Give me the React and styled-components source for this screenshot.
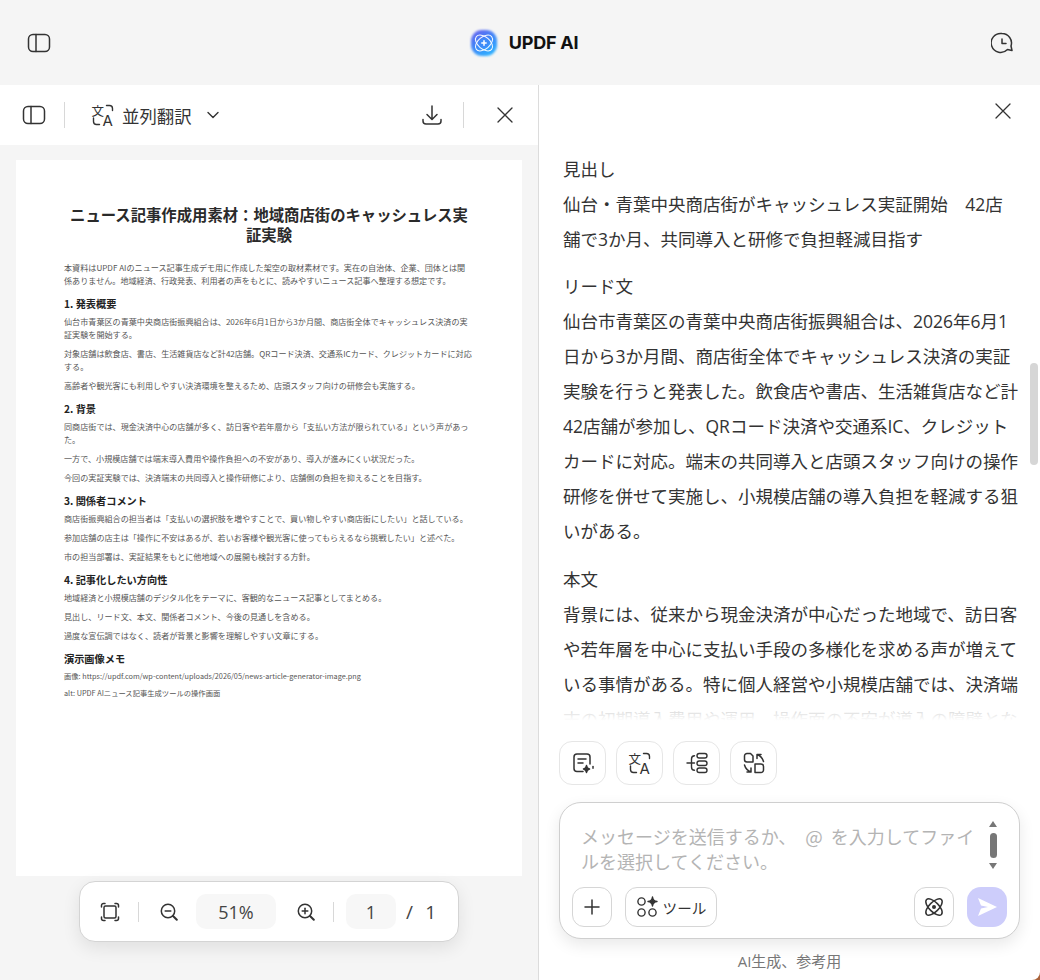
import React from "react";
import styled, { createGlobalStyle } from "styled-components";

const Global = createGlobalStyle`
  html, body { margin: 0; padding: 0; background: #a9623a; }
  body { font-family: "Open Sans", "Noto Sans CJK JP", sans-serif; color: #222; }
  * { box-sizing: border-box; }
`;

const Shell = styled.div`
  width: 1040px; height: 980px; overflow: hidden;
  display: flex; flex-direction: column; background: #fff;
  border-bottom-right-radius: 8px;
`;
const TopBar = styled.header`
  height: 85px; flex: none; background: #f5f5f5;
  display: flex; align-items: center; justify-content: space-between;
  padding: 0 27px 0 27px; position: relative;
`;
const Brand = styled.div`
  display: flex; align-items: center; gap: 9px;
  font: 700 18px "Inter", sans-serif; color: #111; letter-spacing: -0.25px;
  margin-left: 4px;
`;
const IconSlot = styled.span`
  display: inline-flex; align-items: center; justify-content: center; flex: none;
  color: ${p => p.$color || "#333"};
`;
const Split = styled.div`
  flex: 1; min-height: 0; display: grid; grid-template-columns: 538px minmax(0, 1fr);
`;
const LeftPane = styled.section`
  display: flex; flex-direction: column; min-height: 0;
  border-right: 1px solid #dcdcdc; width: 539px; position: relative;
`;
const PdfToolbar = styled.div`
  height: 60px; flex: none; display: flex; align-items: center; padding: 0 25px 0 22px;
`;
const Divider = styled.span`
  width: 1px; height: ${p => p.$h || 26}px; background: #d8d8d8; flex: none;
  margin: 0 ${p => p.$r ?? 26}px 0 ${p => p.$l ?? 20}px;
`;
const ModeLabel = styled.span`
  font-size: 17.4px; color: #333; margin: 0 14px 0 7px;
  font-family: "Noto Sans CJK JP", sans-serif;
`;
const Spacer = styled.span` flex: 1; `;
const Viewer = styled.div`
  flex: 1; min-height: 0; background: #f5f5f5; padding: 15px 16px 0; position: relative; overflow: hidden;
`;
const Sheet = styled.article`
  width: 506px; height: 716px; background: #fff; padding: 44px 48px 0;
  font-family: "Noto Sans CJK JP", sans-serif; color: #555;
`;
const SheetTitle = styled.h1`
  margin: 0 -8px 17px; font-size: 15.35px; line-height: 20px; font-weight: 700; text-align: center; color: #2a2a2a;
  white-space: nowrap;
`;
const SheetHeading = styled.h2`
  margin: 10px 0 4.5px; font-size: 10.2px; line-height: 13px; font-weight: 700; color: #222;
`;
const SheetLine = styled.p`
  margin: 0 -10px ${p => p.$small ? 5 : 6.3}px 0; font-size: ${p => p.$small ? 7.3 : 8.1}px;
  line-height: ${p => p.$small ? 12 : 13}px; white-space: nowrap;
`;
const ZoomBar = styled.div`
  position: absolute; left: 79px; top: 736px; width: 380px; height: 61px;
  background: #fff; border: 1px solid #d4d4d4; border-radius: 16px;
  box-shadow: 0 6px 18px rgba(0,0,0,.09);
  display: flex; align-items: center; padding: 0 0 0 20px;
  font-size: 18px; color: #444;
`;
const ZoomField = styled.span`
  width: ${p => p.$w}px; height: 35px; background: #f7f7f7; border-radius: 10px;
  display: flex; align-items: center; justify-content: center; flex: none;
  margin: ${p => p.$m || "0"};
`;
const PageTotal = styled.span`
  margin-left: 10px; width: 30px; display: flex; justify-content: space-between; font-size: 19px;
`;
const RightPane = styled.section`
  display: flex; flex-direction: column; min-height: 0; min-width: 0; position: relative; padding: 0 0 0 1px;
`;
const CloseRow = styled.div`
  height: 60px; flex: none; display: flex; justify-content: flex-end; align-items: flex-start;
  padding: 18px 29px 0 0;
`;
const Answer = styled.div`
  height: 590px; flex: none; padding: 7px 16px 0 24px; overflow: hidden; position: relative;
  font-family: "Open Sans", "Noto Sans CJK JP", sans-serif; font-size: 17.5px; line-height: 35px; color: #333;
`;
const AnswerBlock = styled.p`
  margin: 0 0 12.4px; white-space: nowrap;
`;
const Fade = styled.div`
  position: absolute; left: 0; right: 0; bottom: 0; height: 60px;
  background: linear-gradient(to bottom, rgba(255,255,255,0) 0, rgba(255,255,255,0) 38%, rgba(255,255,255,.72) 42%, rgba(255,255,255,.85) 62%, #fff 76%);
`;
const ScrollThumb = styled.div`
  position: absolute; right: 2px; top: 218px; width: 8px; height: 102px; background: #d6d6d6; border-radius: 4px;
`;
const Actions = styled.div`
  display: flex; gap: 10px; padding: 0 0 0 20px; flex: none; margin-top: 6px;
`;
const ActionButton = styled.button`
  width: 47px; height: 44px; padding: 0; border: 1px solid #e6e6e6; border-radius: 13px; background: #fff;
  display: flex; align-items: center; justify-content: center; color: #333;
`;
const Composer = styled.div`
  margin: 17px 20px 0 20px; height: 137px; flex: none; background: #fff;
  border: 1px solid #cfcfcf; border-radius: 22px; box-shadow: 0 6px 16px rgba(0,0,0,.09);
  display: flex; flex-direction: column; padding: 21px 12px 11px; position: relative;
`;
const Placeholder = styled.div`
  font-family: "Noto Sans CJK JP", sans-serif;
  font-size: 18px; line-height: 25px; color: #b4b4b4; padding-left: 9px; white-space: nowrap; flex: 1;
`;
const AtSign = styled.span`
  display: inline-block; margin: 0 8px 0 9px; font-size: 18.5px;
`;
const TextScroll = styled.div`
  position: absolute; right: 22px; top: 18px; width: 8px; height: 48px;
  display: flex; flex-direction: column; align-items: center; justify-content: space-between;
`;
const Arrow = styled.span`
  width: 0; height: 0; border-left: 4px solid transparent; border-right: 4px solid transparent;
  ${p => p.$up ? "border-bottom: 6px solid #777;" : "border-top: 6px solid #777;"}
`;
const Thumb = styled.span` width: 7px; height: 25px; border-radius: 4px; background: #777; `;
const ComposerRow = styled.div` display: flex; align-items: center; gap: 13px; `;
const ToolButton = styled.button`
  height: 40px; width: ${p => p.$w || 40}px; padding: 0; background: #fff; border: 1px solid #d6d6d6; border-radius: 12px;
  display: flex; align-items: center; justify-content: center; gap: 5px; color: #333; flex: none;
  font: 400 14.6px "Noto Sans CJK JP", sans-serif;
`;
const SendButton = styled.button`
  height: 40px; width: 40px; padding: 0; border: 0; border-radius: 14px; background: #cdcdfb;
  display: flex; align-items: center; justify-content: center; flex: none;
`;
const Note = styled.div`
  text-align: center; font-size: 15px; line-height: 20px; color: #777; margin-top: 12px;
`;

const Svg = ({ w = 24, h = 24, vb, sw = 1.5, children }) => (
  <svg width={w} height={h} viewBox={vb || `0 0 ${w} ${h}`} fill="none" stroke="currentColor" strokeWidth={sw} strokeLinecap="round" strokeLinejoin="round">{children}</svg>
);
const PanelIcon = () => (
  <Svg w={24} h={20}><rect x="1.5" y="1.5" width="21" height="17" rx="4.5" /><path d="M9 1.5v17" /></Svg>
);
const Logo = () => (
  <svg width="32" height="32" viewBox="0 0 32 32">
    <defs>
      <linearGradient id="lg" x1="0.1" y1="0" x2="0.7" y2="1"><stop offset="0" stopColor="#6a62ee" /><stop offset=".5" stopColor="#3f86f8" /><stop offset="1" stopColor="#2fb2ff" /></linearGradient>
      <filter id="lb" x="-20%" y="-20%" width="140%" height="140%"><feGaussianBlur stdDeviation="1.3" /></filter>
    </defs>
    <rect x="3" y="3" width="26" height="26" rx="11" fill="url(#lg)" filter="url(#lb)" />
    <g fill="none" stroke="#fff" strokeWidth="1" opacity=".95">
      <ellipse cx="16" cy="16" rx="10" ry="6" transform="rotate(40 16 16)" />
      <ellipse cx="16" cy="16" rx="10" ry="6" transform="rotate(-40 16 16)" />
    </g>
    <circle cx="16" cy="16" r="4.6" fill="#3f8cf8" />
    <path d="M16 13.800v4.400M13.800 16h4.400" stroke="#fff" strokeWidth="1.5" strokeLinecap="round" />
  </svg>
);
const HistoryIcon = () => (
  <Svg w={22} h={22}><path d="M11 1.5a9.500 9.500 0 0 1 9 12.500l1 4.500-4.500-1A9.500 9.500 0 1 1 11 1.500z" /><path d="M11 7v4.500h4" /></Svg>
);
const TranslateIcon = () => (
  <svg width="24" height="24" viewBox="0 0 24 24" fill="none" stroke="currentColor" strokeWidth="1.4" strokeLinecap="round" strokeLinejoin="round">
    <path d="M15.500 2.500h3A3 3 0 0 1 21.500 5.500v2" />
    <path d="M2.500 15v3.500a3 3 0 0 0 3 3h3" />
    <text x="0.5" y="12.500" fontSize="12.500" fill="currentColor" stroke="none" fontFamily="Noto Sans CJK JP">文</text>
    <text x="11.500" y="23" fontSize="15" fill="currentColor" stroke="none" fontFamily="Inter">A</text>
  </svg>
);
const Chevron = () => <Svg w={14} h={14} sw={1.4}><path d="M2 4.500 7 9.500 12 4.500" /></Svg>;
const Download = () => (
  <Svg w={22} h={22} sw={1.5}><path d="M11 2v13M6 10.500 11 15.500 16 10.500" /><path d="M2 15.500v1.500a3 3 0 0 0 3 3h12a3 3 0 0 0 3-3v-1.500" /></Svg>
);
const Cross = () => <Svg w={16} h={16} sw={1.3}><path d="M1 1 15 15M15 1 1 15" /></Svg>;
const FitIcon = () => (
  <Svg w={20} h={20}><rect x="4" y="4" width="12" height="12" rx="1.500" /><path d="M1.500 5V3.500a2 2 0 0 1 2-2H5M15 1.500h1.500a2 2 0 0 1 2 2V5M18.500 15v1.500a2 2 0 0 1-2 2H15M5 18.500H3.500a2 2 0 0 1-2-2V15" /></Svg>
);
const ZoomIcon = ({ plus }) => (
  <Svg w={18} h={18}><circle cx="8" cy="8" r="6.700" /><path d="M5.200 8h5.600" />{plus && <path d="M8 5.200v5.600" />}<path d="M13 13 16.800 16.800" strokeWidth="2" /></Svg>
);
const SummaryIcon = () => (
  <Svg w={24} h={24} sw={1.5}>
    <path d="M12 20.500H6a3 3 0 0 1-3-3V6a3 3 0 0 1 3-3h10a3 3 0 0 1 3 3v7" />
    <path d="M7 8h8M7 12h5" />
    <path d="M15.500 14.500c.3 2.400 1 3.100 3 3.500-2 .4-2.700 1.100-3 3.500-.3-2.400-1-3.100-3-3.500 2-.4 2.700-1.100 3-3.500z" fill="currentColor" />
    <path d="M22 15.500v1.800" />
  </Svg>
);
const TreeIcon = () => (
  <Svg w={24} h={24} sw={1.4}>
    <rect x="12" y="2.500" width="10" height="4.500" rx="2.200" /><rect x="12" y="10" width="10" height="4.500" rx="2.200" /><rect x="12" y="17" width="10" height="4.500" rx="2.200" />
    <path d="M9.500 4.800C7.500 4.800 6.500 6 6.500 8v8c0 2 1 3.200 3 3.200M2 12h7.500" />
  </Svg>
);
const SwapIcon = () => (
  <Svg w={24} h={24} sw={1.5}>
    <path d="M2.500 5A2.500 2.500 0 0 1 5 2.500h3.500L11 5v6H5a2.500 2.500 0 0 1-2.500-2.500z" />
    <path d="M13 13h6a2.500 2.500 0 0 1 2.500 2.500V19a2.500 2.500 0 0 1-2.500 2.500H13z" />
    <path d="M15 3.500h4M15 3.500v4M15 3.500c3 1 5.500 3.500 6.500 7" />
    <path d="M9 21H5M9 21v-4M9 21c-3-1-5.500-3.500-6.500-7" />
  </Svg>
);
const ToolsIcon = () => (
  <Svg w={22} h={22} sw={1.4}>
    <circle cx="5.500" cy="5.500" r="3.600" /><circle cx="5.500" cy="16.500" r="3.600" /><circle cx="16.500" cy="16.500" r="3.600" />
    <path d="M16.500 1c.3 3 1.500 4.200 4.500 4.500-3 .3-4.200 1.500-4.500 4.500-.3-3-1.500-4.200-4.500-4.500 3-.3 4.200-1.500 4.500-4.500z" fill="currentColor" />
  </Svg>
);
const AtomIcon = () => (
  <Svg w={22} h={22} sw={1.5}>
    <ellipse cx="11" cy="11" rx="10.500" ry="4.800" transform="rotate(45 11 11)" />
    <ellipse cx="11" cy="11" rx="10.500" ry="4.800" transform="rotate(-45 11 11)" />
    <circle cx="11" cy="11" r="2" fill="currentColor" stroke="none" />
  </Svg>
);
const PlusIcon = () => <Svg w={16} h={16} sw={1.5}><path d="M8 1v14M1 8h14" /></Svg>;
const SendIcon = () => (
  <svg width="22" height="20" viewBox="0 0 22 20"><path d="M2 1 21 10 2 19 5 11.500 12 10 5 8.500z" fill="#fff" /></svg>
);

const sheet = [
  ["p", "本資料はUPDF AIのニュース記事生成デモ用に作成した架空の取材素材です。実在の自治体、企業、団体とは関", "係ありません。地域経済、行政発表、利用者の声をもとに、読みやすいニュース記事へ整理する想定です。"],
  ["h", "1. 発表概要"],
  ["p", "仙台市青葉区の青葉中央商店街振興組合は、2026年6月1日から3か月間、商店街全体でキャッシュレス決済の実", "証実験を開始する。"],
  ["p", "対象店舗は飲食店、書店、生活雑貨店など計42店舗。QRコード決済、交通系ICカード、クレジットカードに対応", "する。"],
  ["p", "高齢者や観光客にも利用しやすい決済環境を整えるため、店頭スタッフ向けの研修会も実施する。"],
  ["h", "2. 背景"],
  ["p", "同商店街では、現金決済中心の店舗が多く、訪日客や若年層から「支払い方法が限られている」という声があっ", "た。"],
  ["p", "一方で、小規模店舗では端末導入費用や操作負担への不安があり、導入が進みにくい状況だった。"],
  ["p", "今回の実証実験では、決済端末の共同導入と操作研修により、店舗側の負担を抑えることを目指す。"],
  ["h", "3. 関係者コメント"],
  ["p", "商店街振興組合の担当者は「支払いの選択肢を増やすことで、買い物しやすい商店街にしたい」と話している。"],
  ["p", "参加店舗の店主は「操作に不安はあるが、若いお客様や観光客に使ってもらえるなら挑戦したい」と述べた。"],
  ["p", "市の担当部署は、実証結果をもとに他地域への展開も検討する方針。"],
  ["h", "4. 記事化したい方向性"],
  ["p", "地域経済と小規模店舗のデジタル化をテーマに、客観的なニュース記事としてまとめる。"],
  ["p", "見出し、リード文、本文、関係者コメント、今後の見通しを含める。"],
  ["p", "過度な宣伝調ではなく、読者が背景と影響を理解しやすい文章にする。"],
  ["h", "演示画像メモ"],
  ["s", "画像: https://updf.com/wp-content/uploads/2026/05/news-article-generator-image.png"],
  ["s", "alt: UPDF AIニュース記事生成ツールの操作画面"],
];

const answer = [
  ["見出し", "仙台・青葉中央商店街がキャッシュレス実証開始　42店", "舗で3か月、共同導入と研修で負担軽減目指す"],
  ["リード文", "仙台市青葉区の青葉中央商店街振興組合は、2026年6月1", "日から3か月間、商店街全体でキャッシュレス決済の実証", "実験を行うと発表した。飲食店や書店、生活雑貨店など計", "42店舗が参加し、QRコード決済や交通系IC、クレジット", "カードに対応。端末の共同導入と店頭スタッフ向けの操作", "研修を併せて実施し、小規模店舗の導入負担を軽減する狙", "いがある。"],
  ["本文", "背景には、従来から現金決済が中心だった地域で、訪日客", "や若年層を中心に支払い手段の多様化を求める声が増えて", "いる事情がある。特に個人経営や小規模店舗では、決済端", "末の初期導入費用や運用、操作面の不安が導入の障壁とな"],
];

const withBreaks = lines => lines.map((l, i) => <React.Fragment key={i}>{i > 0 && <br />}{l}</React.Fragment>);

export default function App() {
  return (
    <Shell>
      <Global />
      <TopBar>
        <IconSlot><PanelIcon /></IconSlot>
        <Brand><Logo />UPDF AI</Brand>
        <IconSlot><HistoryIcon /></IconSlot>
      </TopBar>
      <Split>
        <LeftPane>
          <PdfToolbar>
            <IconSlot><PanelIcon /></IconSlot>
            <Divider $l={18} />
            <IconSlot><TranslateIcon /></IconSlot>
            <ModeLabel>並列翻訳</ModeLabel>
            <IconSlot><Chevron /></IconSlot>
            <Spacer />
            <IconSlot><Download /></IconSlot>
            <Divider $l={20} $r={33} />
            <IconSlot><Cross /></IconSlot>
          </PdfToolbar>
          <Viewer>
            <Sheet>
              <SheetTitle>ニュース記事作成用素材：地域商店街のキャッシュレス実<br />証実験</SheetTitle>
              {sheet.map(([k, ...lines], i) =>
                k === "h"
                  ? <SheetHeading key={i}>{lines[0]}</SheetHeading>
                  : <SheetLine key={i} $small={k === "s"}>{withBreaks(lines)}</SheetLine>
              )}
            </Sheet>
            <ZoomBar>
              <IconSlot><FitIcon /></IconSlot>
              <Divider $h={20} $l={18} $r={21} />
              <IconSlot><ZoomIcon /></IconSlot>
              <ZoomField $w={80} $m="0 21px 0 18px">51%</ZoomField>
              <IconSlot><ZoomIcon plus /></IconSlot>
              <Divider $h={20} $l={18} $r={12} />
              <ZoomField $w={50}>1</ZoomField>
              <PageTotal><span>/</span><span>1</span></PageTotal>
            </ZoomBar>
          </Viewer>
        </LeftPane>
        <RightPane>
          <CloseRow><IconSlot $color="#333"><Cross /></IconSlot></CloseRow>
          <Answer>
            {answer.map((lines, i) => <AnswerBlock key={i}>{withBreaks(lines)}</AnswerBlock>)}
            <Fade />
            <ScrollThumb />
          </Answer>
          <Actions>
            <ActionButton><SummaryIcon /></ActionButton>
            <ActionButton><TranslateIcon /></ActionButton>
            <ActionButton><TreeIcon /></ActionButton>
            <ActionButton><SwapIcon /></ActionButton>
          </Actions>
          <Composer>
            <Placeholder>メッセージを送信するか、<AtSign>@</AtSign>を入力してファイ<br />ルを選択してください。</Placeholder>
            <TextScroll><Arrow $up /><Thumb /><Arrow /></TextScroll>
            <ComposerRow>
              <ToolButton><PlusIcon /></ToolButton>
              <ToolButton $w={92}><ToolsIcon />ツール</ToolButton>
              <Spacer />
              <ToolButton><AtomIcon /></ToolButton>
              <SendButton><SendIcon /></SendButton>
            </ComposerRow>
          </Composer>
          <Note>AI生成、参考用</Note>
        </RightPane>
      </Split>
    </Shell>
  );
}
